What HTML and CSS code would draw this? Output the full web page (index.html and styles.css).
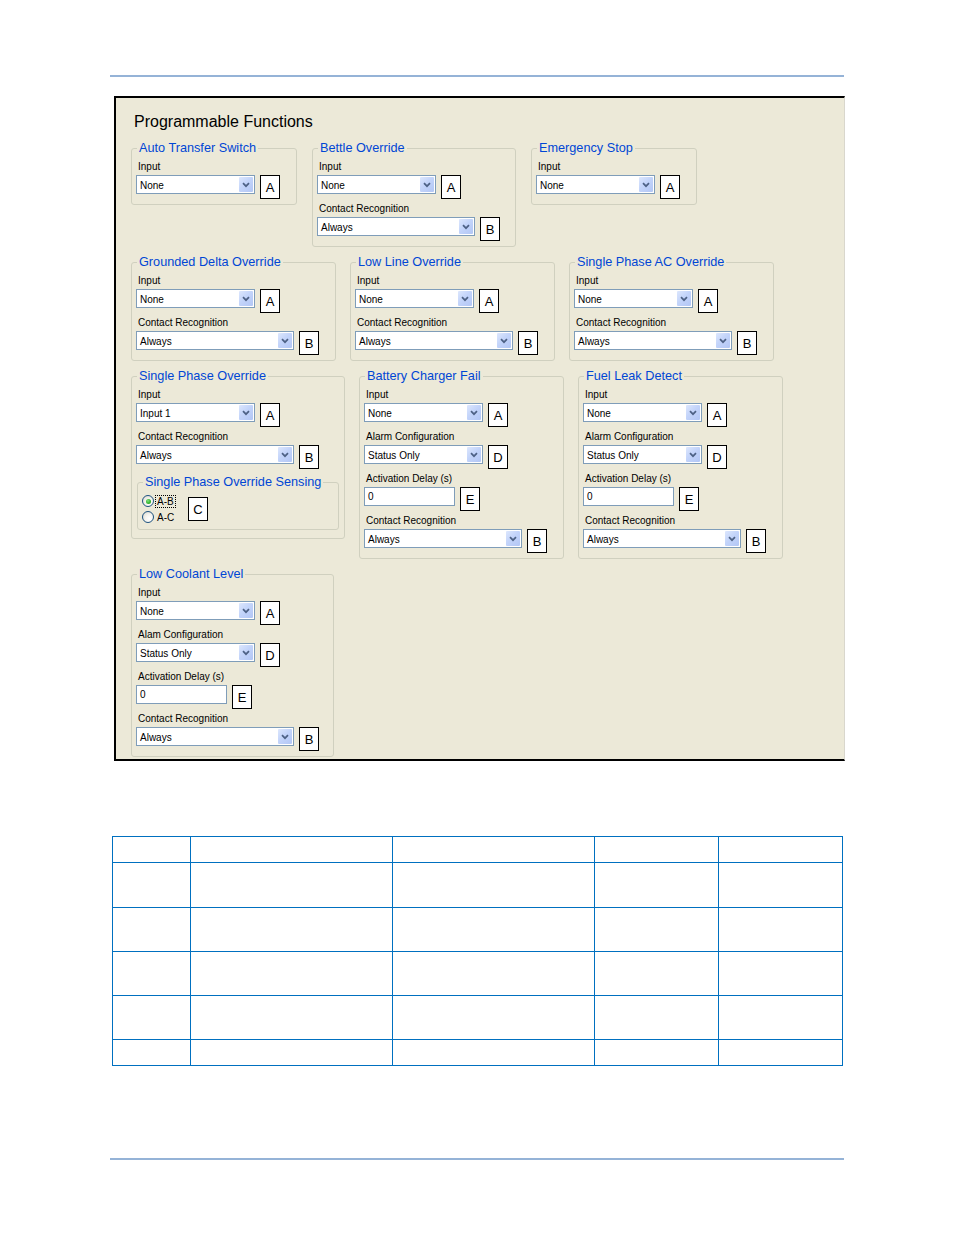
FILE: index.html
```html
<!DOCTYPE html>
<html>
<head>
<meta charset="utf-8">
<link rel="stylesheet" href="styles.css">
</head>
<body>
<div class="page">
  <div class="rule"></div>

  <div class="panel">
    <div class="title">Programmable Functions</div>

    <div class="row row-1">
      <fieldset class="grp w166">
        <legend>Auto Transfer Switch</legend>
        <div class="rows">
          <div class="field">
            <div class="lbl">Input</div>
            <div class="ctl"><div class="dd w119"><span class="dd-val">None</span><span class="dd-btn"><svg width="8" height="6" viewBox="0 0 8 6"><path d="M1 1.2 L4 4.2 L7 1.2" fill="none" stroke="#4D6185" stroke-width="1.7"/></svg></span></div><div class="tag">A</div></div>
          </div>
        </div>
      </fieldset>

      <fieldset class="grp w204">
        <legend>Bettle Override</legend>
        <div class="rows">
          <div class="field">
            <div class="lbl">Input</div>
            <div class="ctl"><div class="dd w119"><span class="dd-val">None</span><span class="dd-btn"><svg width="8" height="6" viewBox="0 0 8 6"><path d="M1 1.2 L4 4.2 L7 1.2" fill="none" stroke="#4D6185" stroke-width="1.7"/></svg></span></div><div class="tag">A</div></div>
          </div>
          <div class="field">
            <div class="lbl">Contact Recognition</div>
            <div class="ctl"><div class="dd w158"><span class="dd-val">Always</span><span class="dd-btn"><svg width="8" height="6" viewBox="0 0 8 6"><path d="M1 1.2 L4 4.2 L7 1.2" fill="none" stroke="#4D6185" stroke-width="1.7"/></svg></span></div><div class="tag">B</div></div>
          </div>
        </div>
      </fieldset>

      <fieldset class="grp w166">
        <legend>Emergency Stop</legend>
        <div class="rows">
          <div class="field">
            <div class="lbl">Input</div>
            <div class="ctl"><div class="dd w119"><span class="dd-val">None</span><span class="dd-btn"><svg width="8" height="6" viewBox="0 0 8 6"><path d="M1 1.2 L4 4.2 L7 1.2" fill="none" stroke="#4D6185" stroke-width="1.7"/></svg></span></div><div class="tag">A</div></div>
          </div>
        </div>
      </fieldset>
    </div>

    <div class="row">
      <fieldset class="grp w205">
        <legend>Grounded Delta Override</legend>
        <div class="rows">
          <div class="field">
            <div class="lbl">Input</div>
            <div class="ctl"><div class="dd w119"><span class="dd-val">None</span><span class="dd-btn"><svg width="8" height="6" viewBox="0 0 8 6"><path d="M1 1.2 L4 4.2 L7 1.2" fill="none" stroke="#4D6185" stroke-width="1.7"/></svg></span></div><div class="tag">A</div></div>
          </div>
          <div class="field">
            <div class="lbl">Contact Recognition</div>
            <div class="ctl"><div class="dd w158"><span class="dd-val">Always</span><span class="dd-btn"><svg width="8" height="6" viewBox="0 0 8 6"><path d="M1 1.2 L4 4.2 L7 1.2" fill="none" stroke="#4D6185" stroke-width="1.7"/></svg></span></div><div class="tag">B</div></div>
          </div>
        </div>
      </fieldset>

      <fieldset class="grp w205">
        <legend>Low Line Override</legend>
        <div class="rows">
          <div class="field">
            <div class="lbl">Input</div>
            <div class="ctl"><div class="dd w119"><span class="dd-val">None</span><span class="dd-btn"><svg width="8" height="6" viewBox="0 0 8 6"><path d="M1 1.2 L4 4.2 L7 1.2" fill="none" stroke="#4D6185" stroke-width="1.7"/></svg></span></div><div class="tag">A</div></div>
          </div>
          <div class="field">
            <div class="lbl">Contact Recognition</div>
            <div class="ctl"><div class="dd w158"><span class="dd-val">Always</span><span class="dd-btn"><svg width="8" height="6" viewBox="0 0 8 6"><path d="M1 1.2 L4 4.2 L7 1.2" fill="none" stroke="#4D6185" stroke-width="1.7"/></svg></span></div><div class="tag">B</div></div>
          </div>
        </div>
      </fieldset>

      <fieldset class="grp w205">
        <legend>Single Phase AC Override</legend>
        <div class="rows">
          <div class="field">
            <div class="lbl">Input</div>
            <div class="ctl"><div class="dd w119"><span class="dd-val">None</span><span class="dd-btn"><svg width="8" height="6" viewBox="0 0 8 6"><path d="M1 1.2 L4 4.2 L7 1.2" fill="none" stroke="#4D6185" stroke-width="1.7"/></svg></span></div><div class="tag">A</div></div>
          </div>
          <div class="field">
            <div class="lbl">Contact Recognition</div>
            <div class="ctl"><div class="dd w158"><span class="dd-val">Always</span><span class="dd-btn"><svg width="8" height="6" viewBox="0 0 8 6"><path d="M1 1.2 L4 4.2 L7 1.2" fill="none" stroke="#4D6185" stroke-width="1.7"/></svg></span></div><div class="tag">B</div></div>
          </div>
        </div>
      </fieldset>
    </div>

    <div class="row">
      <fieldset class="grp w214">
        <legend>Single Phase Override</legend>
        <div class="rows">
          <div class="field">
            <div class="lbl">Input</div>
            <div class="ctl"><div class="dd w119"><span class="dd-val">Input 1</span><span class="dd-btn"><svg width="8" height="6" viewBox="0 0 8 6"><path d="M1 1.2 L4 4.2 L7 1.2" fill="none" stroke="#4D6185" stroke-width="1.7"/></svg></span></div><div class="tag">A</div></div>
          </div>
          <div class="field">
            <div class="lbl">Contact Recognition</div>
            <div class="ctl"><div class="dd w158"><span class="dd-val">Always</span><span class="dd-btn"><svg width="8" height="6" viewBox="0 0 8 6"><path d="M1 1.2 L4 4.2 L7 1.2" fill="none" stroke="#4D6185" stroke-width="1.7"/></svg></span></div><div class="tag">B</div></div>
          </div>
        </div>
        <fieldset class="grp sense">
          <legend>Single Phase Override Sensing</legend>
          <div class="sense-body">
            <div class="radios">
              <div class="radio"><span class="rb on"></span><span class="rlbl focus">A-B</span></div>
              <div class="radio"><span class="rb"></span><span class="rlbl">A-C</span></div>
            </div>
            <div class="tag">C</div>
          </div>
        </fieldset>
      </fieldset>

      <fieldset class="grp w205">
        <legend>Battery Charger Fail</legend>
        <div class="rows">
          <div class="field">
            <div class="lbl">Input</div>
            <div class="ctl"><div class="dd w119"><span class="dd-val">None</span><span class="dd-btn"><svg width="8" height="6" viewBox="0 0 8 6"><path d="M1 1.2 L4 4.2 L7 1.2" fill="none" stroke="#4D6185" stroke-width="1.7"/></svg></span></div><div class="tag">A</div></div>
          </div>
          <div class="field">
            <div class="lbl">Alarm Configuration</div>
            <div class="ctl"><div class="dd w119"><span class="dd-val">Status Only</span><span class="dd-btn"><svg width="8" height="6" viewBox="0 0 8 6"><path d="M1 1.2 L4 4.2 L7 1.2" fill="none" stroke="#4D6185" stroke-width="1.7"/></svg></span></div><div class="tag">D</div></div>
          </div>
          <div class="field">
            <div class="lbl">Activation Delay (s)</div>
            <div class="ctl"><div class="txt w91">0</div><div class="tag">E</div></div>
          </div>
          <div class="field">
            <div class="lbl">Contact Recognition</div>
            <div class="ctl"><div class="dd w158"><span class="dd-val">Always</span><span class="dd-btn"><svg width="8" height="6" viewBox="0 0 8 6"><path d="M1 1.2 L4 4.2 L7 1.2" fill="none" stroke="#4D6185" stroke-width="1.7"/></svg></span></div><div class="tag">B</div></div>
          </div>
        </div>
      </fieldset>

      <fieldset class="grp w205">
        <legend>Fuel Leak Detect</legend>
        <div class="rows">
          <div class="field">
            <div class="lbl">Input</div>
            <div class="ctl"><div class="dd w119"><span class="dd-val">None</span><span class="dd-btn"><svg width="8" height="6" viewBox="0 0 8 6"><path d="M1 1.2 L4 4.2 L7 1.2" fill="none" stroke="#4D6185" stroke-width="1.7"/></svg></span></div><div class="tag">A</div></div>
          </div>
          <div class="field">
            <div class="lbl">Alarm Configuration</div>
            <div class="ctl"><div class="dd w119"><span class="dd-val">Status Only</span><span class="dd-btn"><svg width="8" height="6" viewBox="0 0 8 6"><path d="M1 1.2 L4 4.2 L7 1.2" fill="none" stroke="#4D6185" stroke-width="1.7"/></svg></span></div><div class="tag">D</div></div>
          </div>
          <div class="field">
            <div class="lbl">Activation Delay (s)</div>
            <div class="ctl"><div class="txt w91">0</div><div class="tag">E</div></div>
          </div>
          <div class="field">
            <div class="lbl">Contact Recognition</div>
            <div class="ctl"><div class="dd w158"><span class="dd-val">Always</span><span class="dd-btn"><svg width="8" height="6" viewBox="0 0 8 6"><path d="M1 1.2 L4 4.2 L7 1.2" fill="none" stroke="#4D6185" stroke-width="1.7"/></svg></span></div><div class="tag">B</div></div>
          </div>
        </div>
      </fieldset>
    </div>

    <div class="row">
      <fieldset class="grp w203">
        <legend>Low Coolant Level</legend>
        <div class="rows">
          <div class="field">
            <div class="lbl">Input</div>
            <div class="ctl"><div class="dd w119"><span class="dd-val">None</span><span class="dd-btn"><svg width="8" height="6" viewBox="0 0 8 6"><path d="M1 1.2 L4 4.2 L7 1.2" fill="none" stroke="#4D6185" stroke-width="1.7"/></svg></span></div><div class="tag">A</div></div>
          </div>
          <div class="field">
            <div class="lbl">Alam Configuration</div>
            <div class="ctl"><div class="dd w119"><span class="dd-val">Status Only</span><span class="dd-btn"><svg width="8" height="6" viewBox="0 0 8 6"><path d="M1 1.2 L4 4.2 L7 1.2" fill="none" stroke="#4D6185" stroke-width="1.7"/></svg></span></div><div class="tag">D</div></div>
          </div>
          <div class="field">
            <div class="lbl">Activation Delay (s)</div>
            <div class="ctl"><div class="txt w91">0</div><div class="tag">E</div></div>
          </div>
          <div class="field">
            <div class="lbl">Contact Recognition</div>
            <div class="ctl"><div class="dd w158"><span class="dd-val">Always</span><span class="dd-btn"><svg width="8" height="6" viewBox="0 0 8 6"><path d="M1 1.2 L4 4.2 L7 1.2" fill="none" stroke="#4D6185" stroke-width="1.7"/></svg></span></div><div class="tag">B</div></div>
          </div>
        </div>
      </fieldset>
    </div>
  </div>

  <table class="spec">
    <colgroup>
      <col class="c1"><col class="c2"><col class="c3"><col class="c4"><col class="c5">
    </colgroup>
    <tr class="h26"><td></td><td></td><td></td><td></td><td></td></tr>
    <tr class="h45"><td></td><td></td><td></td><td></td><td></td></tr>
    <tr class="h44"><td></td><td></td><td></td><td></td><td></td></tr>
    <tr class="h44"><td></td><td></td><td></td><td></td><td></td></tr>
    <tr class="h44"><td></td><td></td><td></td><td></td><td></td></tr>
    <tr class="h26"><td></td><td></td><td></td><td></td><td></td></tr>
  </table>

  <div class="rule rule-bottom"></div>
</div>
</body>
</html>
```

FILE: styles.css
```css
* { box-sizing: border-box; }

html, body {
  margin: 0;
  padding: 0;
  background: #ffffff;
  font-family: "Liberation Sans", Arial, sans-serif;
  color: #000;
}

.page {
  width: 954px;
  padding-top: 75px;
}

.rule {
  width: 734px;
  height: 2px;
  margin-left: 110px;
  background: #95B3D7;
}

.rule-bottom {
  margin-top: 92px;
}

/* screenshot panel */
.panel {
  width: 731px;
  margin: 19px 0 0 114px;
  background: #ECE9D8;
  border: 2px solid #000;
  border-right: 1px solid #d9d7cd;
  padding: 15px 0 2px 15px;
}

.title {
  font-size: 16px;
  line-height: 18px;
  margin: 0 0 10px 3px;
}

.row {
  display: flex;
  align-items: flex-start;
  gap: 14px;
  margin-bottom: 8px;
}
.row:last-child { margin-bottom: 0; }
.row-1 { gap: 15px; }

/* group boxes */
fieldset.grp {
  margin: 0;
  min-width: 0;
  padding: 5px 4px 5px 4px;
  border: 1px solid #D0D0BF;
  border-radius: 3px;
}

fieldset.grp > legend {
  padding: 0 2px;
  margin-left: 1px;
  font-size: 12.7px;
  line-height: 14px;
  color: #0046D5;
  white-space: nowrap;
}

.w166 { width: 166px; }
.w203 { width: 203px; }
.w204 { width: 204px; }
.w205 { width: 205px; }
.w214 { width: 214px; }

.rows {
  display: flex;
  flex-direction: column;
  gap: 3px;
}

.lbl {
  font-size: 10px;
  line-height: 13px;
  margin-bottom: 2px;
  padding-left: 2px;
  white-space: nowrap;
}

.ctl {
  display: flex;
  align-items: flex-start;
  gap: 5px;
  height: 24px;
}

/* combo box */
.dd {
  display: flex;
  height: 19px;
  border: 1px solid #7F9DB9;
  background: #fff;
}
.w119 { width: 119px; }
.w158 { width: 158px; }
.w91 { width: 91px; }

.dd-val {
  flex: 1;
  font-size: 10px;
  line-height: 17px;
  padding: 1px 0 0 3px;
  white-space: nowrap;
  overflow: hidden;
}

.dd-btn {
  width: 14px;
  margin: 1px;
  display: flex;
  align-items: center;
  justify-content: center;
  background: linear-gradient(135deg, #DDE7FD 0%, #C3D4FA 45%, #B2C6F5 100%);
  border-radius: 1px;
}

/* text box */
.txt {
  height: 19px;
  border: 1px solid #7F9DB9;
  background: #fff;
  font-size: 10px;
  line-height: 17px;
  padding: 0 0 0 3px;
}

/* callout letter box */
.tag {
  width: 20px;
  height: 24px;
  flex: none;
  border: 1px solid #000;
  background: #fff;
  font-size: 13px;
  line-height: 1;
  display: flex;
  align-items: center;
  justify-content: center;
}

/* inner sensing group */
fieldset.grp.sense {
  width: 202px;
  margin: 6px 0 3px 1px;
  padding: 4px 4px 4px 4px;
}

.sense-body {
  display: flex;
  align-items: flex-start;
}

.radios { width: 46px; }

.radio {
  display: flex;
  align-items: center;
  height: 16px;
  font-size: 10px;
}

.rb {
  width: 12px;
  height: 12px;
  flex: none;
  border-radius: 50%;
  border: 1px solid #1C5180;
  background: radial-gradient(circle at 65% 65%, #ffffff 0%, #f4f3ee 45%, #d6d4c8 100%);
  margin-right: 1px;
  display: flex;
  align-items: center;
  justify-content: center;
}

.rb.on::after {
  content: "";
  width: 5px;
  height: 5px;
  border-radius: 50%;
  background: radial-gradient(circle at 40% 35%, #7ee27a 0%, #2fb12c 60%, #1f8f1d 100%);
}

.rlbl {
  line-height: 11px;
  padding: 0 1px;
  border: 1px solid transparent;
}

.rlbl.focus { border: 1px dotted #000; }

.sense .tag { margin-top: 4px; }

/* table */
.spec {
  border-collapse: collapse;
  margin: 75px 0 0 112px;
  width: 730px;
  table-layout: fixed;
}

.spec td {
  border: 1px solid #0070C0;
  padding: 0;
}

.c1 { width: 78px; }
.c2 { width: 202px; }
.c3 { width: 202px; }
.c4 { width: 124px; }
.c5 { width: 124px; }

.h26 { height: 26px; }
.h45 { height: 45px; }
.h44 { height: 44px; }
```
